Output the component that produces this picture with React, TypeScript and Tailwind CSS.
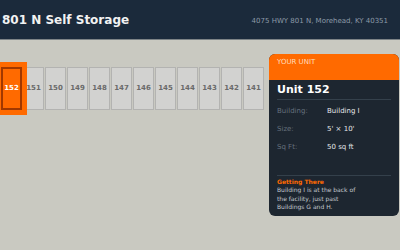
const units = ['152', '151', '150', '149', '148', '147', '146', '145', '144', '143', '142', '141'];

const details = [
    { label: 'Building:', value: 'Building I' },
    { label: 'Size:', value: "5' × 10'" },
    { label: 'Sq Ft:', value: '50 sq ft' },
];

export default function App() {
    const selected = '152';

    return (
        <main className="min-h-screen bg-[#c9c9c1] font-['DejaVu_Sans',sans-serif] overflow-hidden">
            <header className="h-[40px] bg-[#1b2a3b] border-b border-[#7d8386] flex items-center justify-between pl-[2px] pr-[12px]">
                <h1 className="text-[12px] font-bold text-[#f2f2f2] leading-none">801 N Self Storage</h1>
                <span className="text-[7px] text-[#8d9aa8] mt-[4px]">4075 HWY 801 N, Morehead, KY 40351</span>
            </header>

            <div className="flex pt-[14px] pr-[1px]">
                <div className="flex-1 pt-[13px]">
                    <div className="flex gap-[1px] pl-[1px]">
                        {units.map((u) =>
                            u === selected ? (
                                <div
                                    key={u}
                                    className="relative z-10 w-[21px] h-[43px] shrink-0 flex items-center justify-center bg-[#ff6a00] border-2 border-[#a13800] shadow-[0_0_0_5px_#ff6a00] text-[7px] font-bold text-white"
                                >
                                    {u}
                                </div>
                            ) : (
                                <div
                                    key={u}
                                    className="w-[21px] h-[43px] shrink-0 flex items-center justify-center bg-[#d2d2d0] border border-[#b3b3b1] text-[7px] font-bold text-[#6a6a6a]"
                                >
                                    {u}
                                </div>
                            )
                        )}
                    </div>
                </div>

                <aside className="w-[130px] shrink-0 rounded-md overflow-hidden bg-[#1d2630]">
                    <div className="h-[26px] bg-[#ff6a00] px-2 pt-[4px] text-[7px] leading-[8px] text-[#ffdcbc]">YOUR UNIT</div>
                    <div className="px-2">
                        <div className="pt-[3px] pb-[3px] border-b border-[#34404b] text-[11px] leading-[13px] font-bold text-white">
                            Unit {selected}
                        </div>
                        <div className="mt-[2px]">
                            {details.map((d) => (
                                <div key={d.label} className="h-[18px] flex items-center text-[7px]">
                                    <span className="w-[50px] text-[#66717d]">{d.label}</span>
                                    <span className="text-[#e6e8ea]">{d.value}</span>
                                </div>
                            ))}
                        </div>
                        <div className="mt-[19px] border-t border-[#34404b] pt-[2px] pb-[4px]">
                            <div className="text-[6px] leading-[8px] font-bold text-[#ff6a00]">Getting There</div>
                            <p className="text-[6px] leading-[8.5px] text-[#c4c9ce] w-[90px]">
                                Building I is at the back of the facility, just past Buildings G and H.
                            </p>
                        </div>
                    </div>
                </aside>
            </div>
        </main>
    );
}
